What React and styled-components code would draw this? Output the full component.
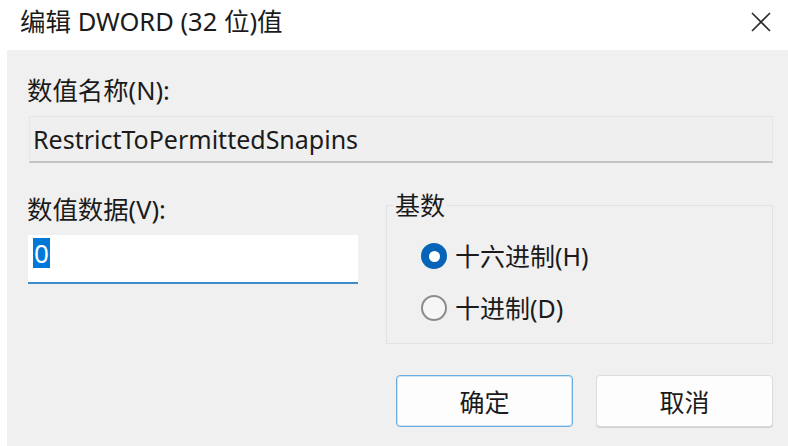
import React from "react";
import styled, { createGlobalStyle } from "styled-components";

const Global = createGlobalStyle`
  html, body { margin: 0; padding: 0; background: #ffffff; }
  body { font-family: "Noto Sans", "Noto Sans CJK SC", sans-serif; color: #1a1a1a; }
  * { box-sizing: border-box; }
`;

const Window = styled.div`
  width: 788px;
  height: 446px;
  display: flex;
  flex-direction: column;
  background: #ffffff;
  overflow: hidden;
`;

const TitleBar = styled.div`
  height: 50px;
  display: flex;
  align-items: center;
  justify-content: space-between;
  padding: 0 15px 6px 20px;
  background: #ffffff;
`;

const Title = styled.div`
  font-size: 25.5px;
  line-height: 1;
  color: #1b1b1b;
`;

const CloseButton = styled.div`
  width: 24px;
  height: 24px;
  display: flex;
  align-items: center;
  justify-content: center;
`;

const Body = styled.div`
  flex: 1;
  margin-left: 7px;
  background: #f0f0f0;
  padding: 24px 15px 0 20px;
  display: flex;
  flex-direction: column;
`;

const Label = styled.div`
  font-size: 25.4px;
  line-height: 32px;
  color: #1b1b1b;
`;

const NameField = styled.div`
  margin: 10px 0 0 2px;
  height: 47px;
  background: #efefef;
  border-top: 1px solid #e4e4e4;
  border-left: 1px solid #e6e6e6;
  border-right: 1px solid #e6e6e6;
  border-bottom: 2px solid #c4c4c4;
  display: flex;
  align-items: center;
  padding-left: 3px;
  font-size: 25px;
  color: #1b1b1b;
`;

const Lower = styled.div`
  display: flex;
  margin-top: 30px;
  gap: 28px;
`;

const LeftCol = styled.div`
  width: 331px;
  display: flex;
  flex-direction: column;
`;

const ValueInput = styled.div`
  margin: 10px 0 0 1px;
  height: 49px;
  background: #ffffff;
  border-bottom: 2px solid #3f8dc8;
  display: flex;
  align-items: flex-start;
  padding: 3px 0 0 5px;
`;

const Selected = styled.span`
  background: #0078d7;
  color: #ffffff;
  font-size: 26px;
  line-height: 30px;
  padding: 0 1px;
`;

const Group = styled.div`
  position: relative;
  flex: 1;
  margin-top: 12px;
  height: 139px;
  border: 1px solid #e2e2e2;
  padding: 35px 0 0 34px;
  display: flex;
  flex-direction: column;
  gap: 22px;
`;

const GroupLabel = styled.div`
  position: absolute;
  top: -15px;
  left: 6px;
  padding: 0 2px;
  background: #f0f0f0;
  font-size: 25px;
  line-height: 28px;
  color: #1b1b1b;
`;

const RadioRow = styled.div`
  display: flex;
  align-items: center;
  gap: 8px;
  font-size: 25px;
  line-height: 30px;
  color: #1b1b1b;
`;

const RadioCircle = styled.span`
  width: 26px;
  height: 26px;
  border-radius: 50%;
  flex: none;
  display: flex;
  align-items: center;
  justify-content: center;
  background: ${(p) => (p.$checked ? "#0563b8" : "#f6f6f6")};
  border: ${(p) => (p.$checked ? "none" : "2px solid #8b8b8b")};
  &::after {
    content: "";
    display: ${(p) => (p.$checked ? "block" : "none")};
    width: 11px;
    height: 11px;
    border-radius: 50%;
    background: #ffffff;
  }
`;

const Buttons = styled.div`
  display: flex;
  justify-content: flex-end;
  gap: 23px;
  margin-top: 31px;
`;

const Button = styled.div`
  width: 177px;
  height: 52px;
  border-radius: 4px;
  background: #fdfdfd;
  border: 1px solid ${(p) => (p.$primary ? "#6aaee0" : "#dcdcdc")};
  box-shadow: ${(p) => (p.$primary ? "inset 0 0 0 1px #cfe3f3" : "0 1px 0 #cfcfcf")};
  display: flex;
  align-items: center;
  justify-content: center;
  font-size: 25px;
  color: #1b1b1b;
`;

export default function App() {
  return (
    <Window>
      <Global />
      <TitleBar>
        <Title>编辑 DWORD (32 位)值</Title>
        <CloseButton>
          <svg width="22" height="22" viewBox="0 0 22 22">
            <path d="M2 2 L20 20 M20 2 L2 20" stroke="#2b2b2b" strokeWidth="1.6" fill="none" />
          </svg>
        </CloseButton>
      </TitleBar>
      <Body>
        <Label>数值名称(N):</Label>
        <NameField>RestrictToPermittedSnapins</NameField>
        <Lower>
          <LeftCol>
            <Label>数值数据(V):</Label>
            <ValueInput>
              <Selected>0</Selected>
            </ValueInput>
          </LeftCol>
          <Group>
            <GroupLabel>基数</GroupLabel>
            <RadioRow>
              <RadioCircle $checked />
              十六进制(H)
            </RadioRow>
            <RadioRow>
              <RadioCircle />
              十进制(D)
            </RadioRow>
          </Group>
        </Lower>
        <Buttons>
          <Button $primary>确定</Button>
          <Button>取消</Button>
        </Buttons>
      </Body>
    </Window>
  );
}
